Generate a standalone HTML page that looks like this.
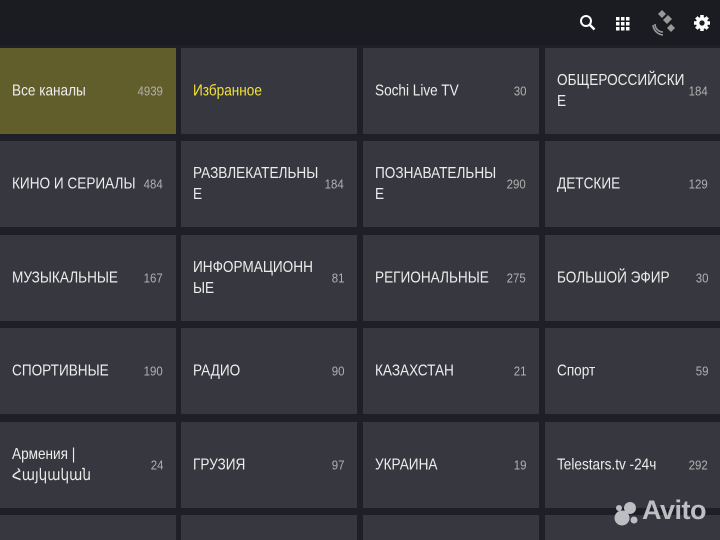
<!DOCTYPE html>
<html><head><meta charset="utf-8"><style>
*{margin:0;padding:0;box-sizing:border-box}
html,body{width:720px;height:540px;overflow:hidden}
body{background:#1e1f27;font-family:"Liberation Sans",sans-serif;position:relative}
.hdr{position:absolute;left:0;top:0;width:720px;height:45px;background:#1b1b22}
.t{position:absolute;width:176px;height:86px;background:#37383f;color:#ececec;font-size:16px;overflow:hidden}
.t .n{position:absolute;left:12px;top:50%;transform:translateY(-50%) scaleX(0.85);transform-origin:0 50%;line-height:21px;width:150px}
.t .c{position:absolute;right:13px;top:50%;transform:translateY(-50%) scaleX(0.88);transform-origin:100% 50%;font-size:13px;color:#b0b0b0}
.sel{background:#625e2b}
.y{color:#f2e23a}
.ic{position:absolute;top:12px}
.b{height:25px}
</style></head><body>
<div class="hdr"></div>
<svg class="ic" style="left:578px" width="20" height="22" viewBox="0 0 20 22"><circle cx="8" cy="9" r="5" stroke="#fff" stroke-width="2" fill="none"/><path d="M11.5 12.5l5 5" stroke="#fff" stroke-width="2.5"/></svg>
<svg class="ic" style="left:615px;top:16px" width="16" height="16" viewBox="0 0 16 16" fill="#fff"><rect x="1" y="1" width="3.5" height="3.5"/><rect x="6" y="1" width="3.5" height="3.5"/><rect x="11" y="1" width="3.5" height="3.5"/><rect x="1" y="6" width="3.5" height="3.5"/><rect x="6" y="6" width="3.5" height="3.5"/><rect x="11" y="6" width="3.5" height="3.5"/><rect x="1" y="11" width="3.5" height="3.5"/><rect x="6" y="11" width="3.5" height="3.5"/><rect x="11" y="11" width="3.5" height="3.5"/></svg>
<svg class="ic" style="left:650px;top:8px" width="28" height="30" viewBox="0 0 28 30" fill="#999"><path d="M8 6l4-4 4 4-4 4z"/><path d="M13 12l5-5 4 4-5 5z"/><path d="M17 20l4-4 4 4-4 4z"/><path d="M5 16a8 8 0 0 0 8 8" stroke="#999" stroke-width="1.6" fill="none"/><path d="M3 17a11 11 0 0 0 10 10" stroke="#999" stroke-width="1.6" fill="none"/></svg>
<svg class="ic" style="left:692px;top:13px" width="20" height="20" viewBox="0 0 20 20"><circle cx="10" cy="10" r="6" fill="#fff"/><g stroke="#fff" stroke-width="3.5"><path d="M10 2v16M2 10h16M4.3 4.3l11.4 11.4M15.7 4.3L4.3 15.7"/></g><circle cx="10" cy="10" r="2.6" fill="#1b1b22"/></svg>

<div class="t sel" style="left:0;top:48px"><span class="n">Все каналы</span><span class="c">4939</span></div>
<div class="t" style="left:181px;top:48px"><span class="n y">Избранное</span></div>
<div class="t" style="left:363px;top:48px"><span class="n">Sochi Live TV</span><span class="c">30</span></div>
<div class="t" style="left:545px;top:48px"><span class="n">ОБЩЕРОССИЙСКИ<br>Е</span><span class="c">184</span></div>

<div class="t" style="left:0;top:141px"><span class="n">КИНО И СЕРИАЛЫ</span><span class="c">484</span></div>
<div class="t" style="left:181px;top:141px"><span class="n">РАЗВЛЕКАТЕЛЬНЫ<br>Е</span><span class="c">184</span></div>
<div class="t" style="left:363px;top:141px"><span class="n">ПОЗНАВАТЕЛЬНЫ<br>Е</span><span class="c">290</span></div>
<div class="t" style="left:545px;top:141px"><span class="n">ДЕТСКИЕ</span><span class="c">129</span></div>

<div class="t" style="left:0;top:235px"><span class="n">МУЗЫКАЛЬНЫЕ</span><span class="c">167</span></div>
<div class="t" style="left:181px;top:235px"><span class="n">ИНФОРМАЦИОНН<br>ЫЕ</span><span class="c">81</span></div>
<div class="t" style="left:363px;top:235px"><span class="n">РЕГИОНАЛЬНЫЕ</span><span class="c">275</span></div>
<div class="t" style="left:545px;top:235px"><span class="n">БОЛЬШОЙ ЭФИР</span><span class="c">30</span></div>

<div class="t" style="left:0;top:328px"><span class="n">СПОРТИВНЫЕ</span><span class="c">190</span></div>
<div class="t" style="left:181px;top:328px"><span class="n">РАДИО</span><span class="c">90</span></div>
<div class="t" style="left:363px;top:328px"><span class="n">КАЗАХСТАН</span><span class="c">21</span></div>
<div class="t" style="left:545px;top:328px"><span class="n">Спорт</span><span class="c">59</span></div>

<div class="t" style="left:0;top:422px"><span class="n">Армения |<br>Հայկական</span><span class="c">24</span></div>
<div class="t" style="left:181px;top:422px"><span class="n">ГРУЗИЯ</span><span class="c">97</span></div>
<div class="t" style="left:363px;top:422px"><span class="n">УКРАИНА</span><span class="c">19</span></div>
<div class="t" style="left:545px;top:422px"><span class="n">Telestars.tv -24ч</span><span class="c">292</span></div>

<div class="t b" style="left:0;top:515px"></div>
<div class="t b" style="left:181px;top:515px"></div>
<div class="t b" style="left:363px;top:515px"></div>
<div class="t b" style="left:545px;top:515px"></div>

<svg style="position:absolute;left:614px;top:501px" width="28" height="26" viewBox="0 0 28 26" fill="#bdbdc2"><circle cx="16" cy="7" r="6"/><circle cx="8" cy="17" r="7.5"/><circle cx="5" cy="7" r="3"/><circle cx="20" cy="19" r="3.5"/></svg>
<div style="position:absolute;left:642px;top:495px;font-family:'Liberation Sans',sans-serif;font-weight:bold;font-size:27px;line-height:31px;color:#bdbdc2;letter-spacing:-0.5px">Avito</div>
</body></html>
